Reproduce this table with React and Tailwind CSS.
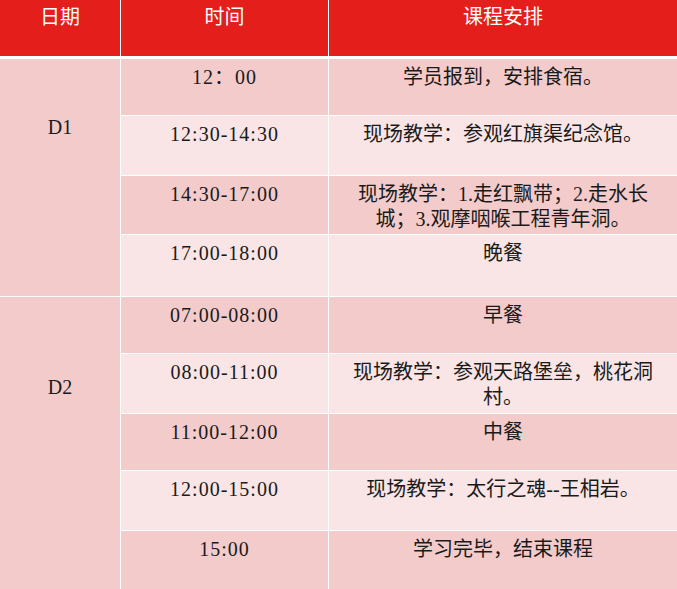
import React from "react";

const rows = [
  { time: "12：00", text: ["学员报到，安排食宿。"] },
  { time: "12:30-14:30", text: ["现场教学：参观红旗渠纪念馆。"] },
  { time: "14:30-17:00", text: ["现场教学：1.走红飘带；2.走水长", "城；3.观摩咽喉工程青年洞。"] },
  { time: "17:00-18:00", text: ["晚餐"] },
  { time: "07:00-08:00", text: ["早餐"] },
  { time: "08:00-11:00", text: ["现场教学：参观天路堡垒，桃花洞", "村。"] },
  { time: "11:00-12:00", text: ["中餐"] },
  { time: "12:00-15:00", text: ["现场教学：太行之魂--王相岩。"] },
  { time: "15:00", text: ["学习完毕，结束课程"] },
];

const font = { fontFamily: '"Liberation Serif", "Noto Sans CJK SC", serif' };

const App = () => {
  const cells = [];
  rows.forEach((row, i) => {
    if (i === 0) {
      cells.push(
        <div key="d1" className="row-span-4 bg-[#f3cbcb] pt-[56px] text-center">D1</div>
      );
    }
    if (i === 4) {
      cells.push(
        <div key="d2" className="row-span-5 bg-[#f3cbcb] pt-[78px] text-center">D2</div>
      );
    }
    const bg = i % 2 === 0 ? "bg-[#f3cbcb]" : "bg-[#f9e5e5]";
    cells.push(
      <div key={"t" + i} className={bg + " pt-[6px] text-center tracking-[1px]"}>
        {row.time}
      </div>
    );
    cells.push(
      <div key={"c" + i} className={bg + " pt-[6px] text-center"}>
        {row.text.map((line, j) => (
          <div key={j}>{line}</div>
        ))}
      </div>
    );
  });

  return (
    <div className="w-[677px] h-[589px] overflow-hidden bg-white text-[20px] leading-[25px] text-[#1a1a1a]" style={font}>
      <div className="grid grid-cols-[120px_207px_348px] gap-x-px h-[56px] text-white">
        <div className="bg-[#e41f1b] pt-[5px] text-center">日期</div>
        <div className="bg-[#e41f1b] pt-[5px] text-center">时间</div>
        <div className="bg-[#e41f1b] pt-[5px] text-center">课程安排</div>
      </div>
      <div className="mt-[3px] grid grid-cols-[120px_207px_348px] grid-rows-[56px_59px_58px_61px_56px_59px_56px_59px_58px] gap-px">
        {cells}
      </div>
    </div>
  );
};

export default App;
